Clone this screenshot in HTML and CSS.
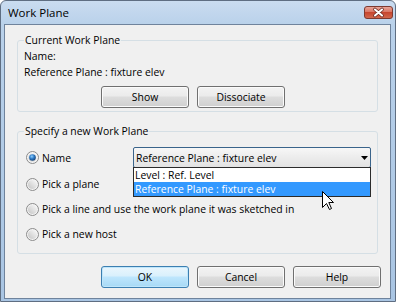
FILE: index.html
```html
<!DOCTYPE html>
<html>
<head>
<meta charset="utf-8">
<link rel="stylesheet" href="styles.css">
</head>
<body>
<div class="window">
  <div class="titlebar">
    <span class="title">Work Plane</span>
    <span class="close">
      <svg width="29" height="13" viewBox="0 0 29 13">
        <defs>
          <linearGradient id="cg" x1="0" y1="0" x2="0" y2="1">
            <stop offset="0" stop-color="#e9a99c"/>
            <stop offset="0.5" stop-color="#d8705e"/>
            <stop offset="0.5" stop-color="#c7462f"/>
            <stop offset="1" stop-color="#d26a4f"/>
          </linearGradient>
        </defs>
        <rect x="0.5" y="0.5" width="28" height="12" rx="2.5" fill="url(#cg)" stroke="#7d3a30"/>
        <path d="M11 3.5 L18 9.5 M18 3.5 L11 9.5" stroke="#6b2a22" stroke-width="3.6" stroke-linecap="round"/>
        <path d="M11 3.5 L18 9.5 M18 3.5 L11 9.5" stroke="#ffffff" stroke-width="2.1" stroke-linecap="round"/>
      </svg>
    </span>
  </div>
  <div class="client">
    <fieldset class="group g1">
      <legend>Current Work Plane</legend>
      <div class="line">Name:</div>
      <div class="line">Reference Plane : fixture elev</div>
      <div class="grpbtns">
        <div class="btn">Show</div>
        <div class="btn">Dissociate</div>
      </div>
    </fieldset>
    <fieldset class="group g2">
      <legend>Specify a new Work Plane</legend>
      <div class="row namerow">
        <div class="radio">
          <svg class="rb" width="13" height="13" viewBox="0 0 13 13">
            <defs>
              <linearGradient id="rg1" x1="0" y1="1" x2="1" y2="0">
                <stop offset="0" stop-color="#c8c8c8"/>
                <stop offset="1" stop-color="#fbfbfb"/>
              </linearGradient>
              <radialGradient id="dot" cx="0.4" cy="0.35" r="0.7">
                <stop offset="0" stop-color="#8fd0ff"/>
                <stop offset="0.5" stop-color="#2b78c4"/>
                <stop offset="1" stop-color="#173e6e"/>
              </radialGradient>
            </defs>
            <circle cx="6.5" cy="6.5" r="6" fill="#f4f4f4" stroke="#8b8b8b"/>
            <circle cx="6.5" cy="6.5" r="4.2" fill="url(#rg1)"/>
            <circle cx="6.5" cy="6.5" r="3.3" fill="url(#dot)"/>
          </svg>
          <span>Name</span>
        </div>
        <div class="combo">
          <span class="combo-text">Reference Plane : fixture elev</span>
          <svg class="arrow" width="7" height="4" viewBox="0 0 7 4"><path d="M0 0 H7 L3.5 4 Z" fill="#000"/></svg>
          <div class="droplist">
            <div class="item">Level : Ref. Level</div>
            <div class="item sel">Reference Plane : fixture elev</div>
          </div>
        </div>
      </div>
      <div class="row r2">
        <div class="radio">
          <svg class="rb" width="13" height="13" viewBox="0 0 13 13">
            <defs>
              <linearGradient id="rg2" x1="0" y1="1" x2="1" y2="0">
                <stop offset="0" stop-color="#c4c4c4"/>
                <stop offset="1" stop-color="#fafafa"/>
              </linearGradient>
            </defs>
            <circle cx="6.5" cy="6.5" r="6" fill="#f4f4f4" stroke="#8b8b8b"/>
            <circle cx="6.5" cy="6.5" r="4.6" fill="url(#rg2)"/>
          </svg>
          <span>Pick a plane</span>
        </div>
      </div>
      <div class="row r3">
        <div class="radio">
          <svg class="rb" width="13" height="13" viewBox="0 0 13 13">
            <circle cx="6.5" cy="6.5" r="6" fill="#f4f4f4" stroke="#8b8b8b"/>
            <circle cx="6.5" cy="6.5" r="4.6" fill="url(#rg2)"/>
          </svg>
          <span>Pick a line and use the work plane it was sketched in</span>
        </div>
      </div>
      <div class="row r4">
        <div class="radio">
          <svg class="rb" width="13" height="13" viewBox="0 0 13 13">
            <circle cx="6.5" cy="6.5" r="6" fill="#f4f4f4" stroke="#8b8b8b"/>
            <circle cx="6.5" cy="6.5" r="4.6" fill="url(#rg2)"/>
          </svg>
          <span>Pick a new host</span>
        </div>
      </div>
    </fieldset>
    <div class="dlgbtns">
      <div class="btn default">OK</div>
      <div class="btn">Cancel</div>
      <div class="btn">Help</div>
    </div>
  </div>
  <svg class="cursor" width="13" height="20" viewBox="0 0 13 20">
    <path d="M0.5 0.5 L0.5 16.5 L4.5 12.5 L7.5 18.5 L9.5 17.5 L6.8 11.5 L11.5 11.5 Z" fill="#fff" stroke="#000" stroke-width="1" stroke-linejoin="miter"/>
  </svg>
</div>
</body>
</html>
```

FILE: styles.css
```css
* { box-sizing: border-box; }
html, body { margin: 0; padding: 0; }
body {
  width: 396px;
  height: 302px;
  overflow: hidden;
  background: #ffffff;
  font-family: "Open Sans", "Noto Sans", sans-serif;
  font-size: 10.4px;
  color: #000;
}
.window {
  position: relative;
  width: 396px;
  height: 302px;
  border: 1px solid #5f6e82;
  border-radius: 6px 6px 0 0;
  background: linear-gradient(#cadcf0, #b9d1ea 24px, #a9c5e3 100%);
  padding: 0 4px 2px 3px;
  display: flex;
  flex-direction: column;
}
.titlebar {
  height: 23px;
  flex: none;
  display: flex;
  align-items: center;
  justify-content: space-between;
  padding-left: 4px;
  margin-right: -2px;
}
.title {
  font-size: 11.5px;
  line-height: 14px;
  color: #000;
}
.close { display: flex; }
.client {
  flex: 1;
  border: 1px solid #6f839c;
  background: #f0f0f0;
  padding: 8px 12px 0 12px;
  display: flex;
  flex-direction: column;
}
.group {
  margin: 0;
  min-width: 0;
  border: 1px solid #d5dfe5;
  border-radius: 3px;
  padding: 0 6px 3px 6px;
}
.group legend {
  padding: 0 1px;
  line-height: 15px;
}
.line { line-height: 16px; }
.btn {
  width: 88px;
  height: 22px;
  border: 1px solid #707070;
  border-radius: 3px;
  background: linear-gradient(#f3f3f3, #ebebeb 45%, #dddddd 50%, #cfcfcf);
  box-shadow: inset 0 0 0 1px #fbfbfb;
  display: flex;
  align-items: center;
  justify-content: center;
  line-height: 14px;
}
.btn.default {
  border-color: #3c7fb1;
  background: linear-gradient(#eaf6fd, #d9f0fc 45%, #bee6fd 50%, #a7d9f5);
  box-shadow: inset 0 0 0 1px #bfe6fb;
}
.grpbtns {
  display: flex;
  gap: 8px;
  margin-top: 6px;
  padding-left: 77px;
}
.g2 { margin-top: 12px; padding-bottom: 11px; }
.row { padding-left: 2px; }
.namerow {
  margin-top: 8px;
  display: grid;
  grid-template-columns: 107px 1fr;
  align-items: center;
  height: 21px;
}
.r2 { margin-top: 8px; }
.r3, .r4 { margin-top: 9px; }
.radio {
  display: flex;
  align-items: center;
  gap: 3px;
  line-height: 16px;
  height: 16px;
}
.rb { flex: none; }
.combo {
  position: relative;
  height: 21px;
  border: 1px solid #3a648b;
  border-radius: 2px;
  background: linear-gradient(#f7f7f7, #ececec 50%, #e2e2e2);
  display: flex;
  align-items: center;
  justify-content: space-between;
  padding: 0 2px 0 2px;
}
.combo-text { line-height: 16px; }
.arrow { flex: none; }
.droplist {
  position: absolute;
  top: 100%;
  left: -1px;
  right: -1px;
  border: 1px solid #2b2b2b;
  background: #fff;
  z-index: 2;
}
.item {
  line-height: 14px;
  height: 14px;
  padding-left: 1px;
  white-space: nowrap;
}
.item.sel {
  background: #3399ff;
  color: #fff;
}
.dlgbtns {
  display: flex;
  justify-content: flex-end;
  gap: 8px;
  margin: 12px -3px 0 0;
}
.cursor {
  position: absolute;
  left: 321px;
  top: 190px;
  z-index: 5;
}
```
